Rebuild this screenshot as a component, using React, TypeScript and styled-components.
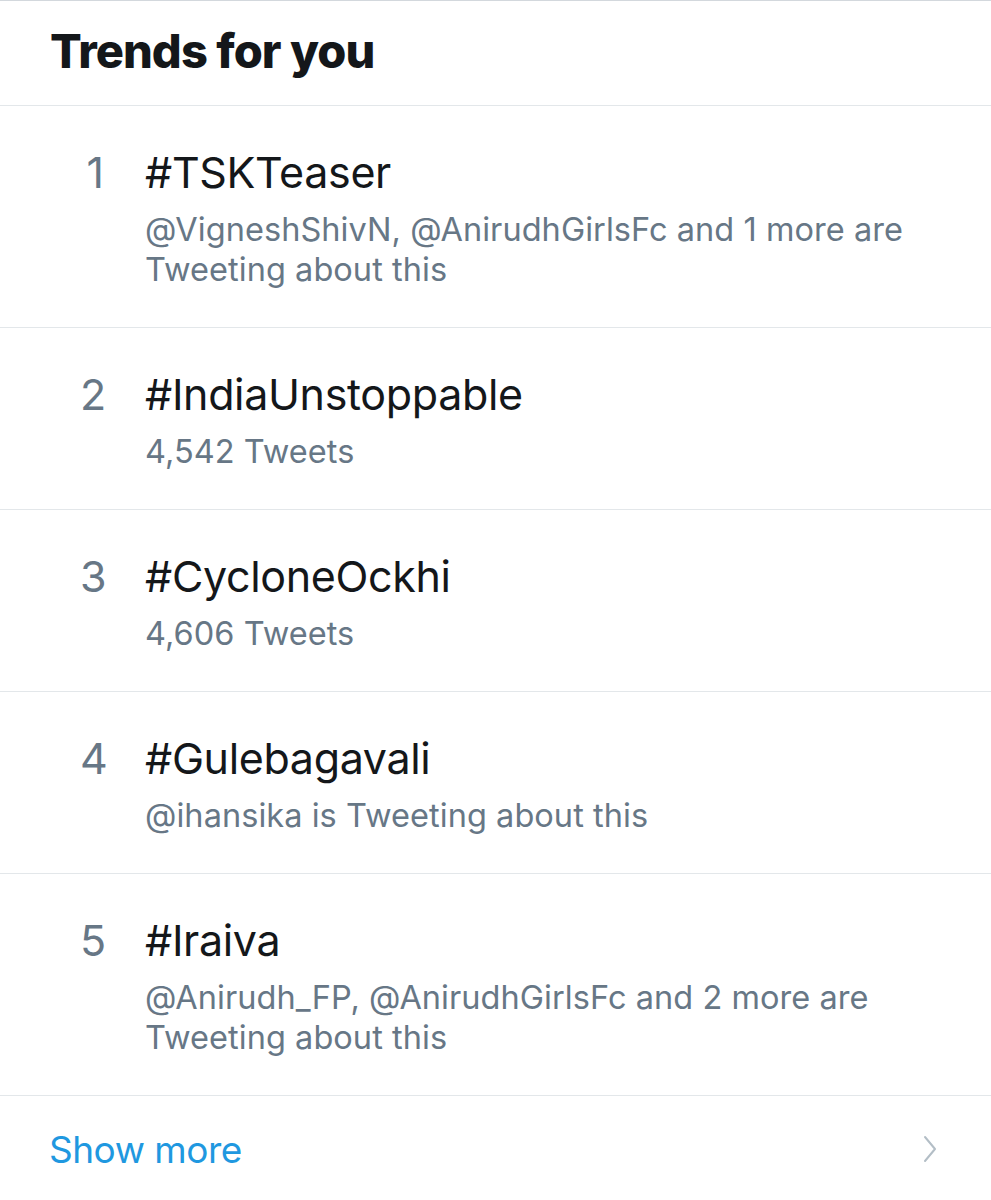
import React from "react";
import styled, { createGlobalStyle } from "styled-components";

const Global = createGlobalStyle`
  html, body { margin: 0; padding: 0; background: #ffffff; }
  body { font-family: Inter, "Noto Sans", "Liberation Sans", sans-serif; -webkit-font-smoothing: antialiased; }
`;

const Panel = styled.section`
  width: 991px;
  border-top: 1px solid #d3d8dd;
  background: #ffffff;
`;

const Header = styled.header`
  height: 105px;
  box-sizing: border-box;
  padding: 21px 0 0 50px;
  border-bottom: 1px solid #e3e7ea;
`;

const Heading = styled.h2`
  margin: 0;
  font-size: 47px;
  line-height: 58px;
  font-weight: 800;
  letter-spacing: -0.95px;
  color: #14171a;
`;

const Row = styled.div`
  display: grid;
  grid-template-columns: 24px 1fr;
  column-gap: 41px;
  padding: 40px 60px 37px 80px;
  border-bottom: 1px solid #e3e7ea;
`;

const Rank = styled.div`
  font-size: 43px;
  line-height: 52px;
  color: #677786;
  font-weight: 400;
  text-align: right;
`;

const Body = styled.div`
  display: flex;
  flex-direction: column;
  gap: 12px;
  min-width: 0;
`;

const Tag = styled.div`
  font-size: 43px;
  line-height: 52px;
  color: #14171a;
  letter-spacing: -0.35px;
`;

const Meta = styled.div`
  font-size: 32.5px;
  line-height: 40px;
  color: #677786;
  letter-spacing: 0.05px;
`;

const Footer = styled.a`
  display: flex;
  align-items: center;
  justify-content: space-between;
  height: 104px;
  box-sizing: border-box;
  padding: 0 54px 0 49px;
  text-decoration: none;
`;

const FooterLabel = styled.span`
  font-size: 37px;
  line-height: 44px;
  color: #1f98e0;
  letter-spacing: -0.5px;
  margin-top: 3px;
`;

const Chevron = styled.svg`
  width: 14px;
  height: 28px;
  margin-top: 2px;
`;

const trends = [
  { rank: 1, tag: "#TSKTeaser", meta: "@VigneshShivN, @AnirudhGirlsFc and 1 more are Tweeting about this" },
  { rank: 2, tag: "#IndiaUnstoppable", meta: "4,542 Tweets" },
  { rank: 3, tag: "#CycloneOckhi", meta: "4,606 Tweets" },
  { rank: 4, tag: "#Gulebagavali", meta: "@ihansika is Tweeting about this" },
  { rank: 5, tag: "#Iraiva", meta: "@Anirudh_FP, @AnirudhGirlsFc and 2 more are Tweeting about this" },
];

export default function App() {
  return (
    <>
      <Global />
      <Panel>
        <Header>
          <Heading>Trends for you</Heading>
        </Header>
        {trends.map((t) => (
          <Row key={t.rank}>
            <Rank>{t.rank}</Rank>
            <Body>
              <Tag>{t.tag}</Tag>
              <Meta>{t.meta}</Meta>
            </Body>
          </Row>
        ))}
        <Footer href="#">
          <FooterLabel>Show more</FooterLabel>
          <Chevron viewBox="0 0 14 28" fill="none">
            <path d="M2 2 L12 14 L2 26" stroke="#b3bec6" strokeWidth="2" strokeLinecap="round" strokeLinejoin="round" />
          </Chevron>
        </Footer>
      </Panel>
    </>
  );
}
